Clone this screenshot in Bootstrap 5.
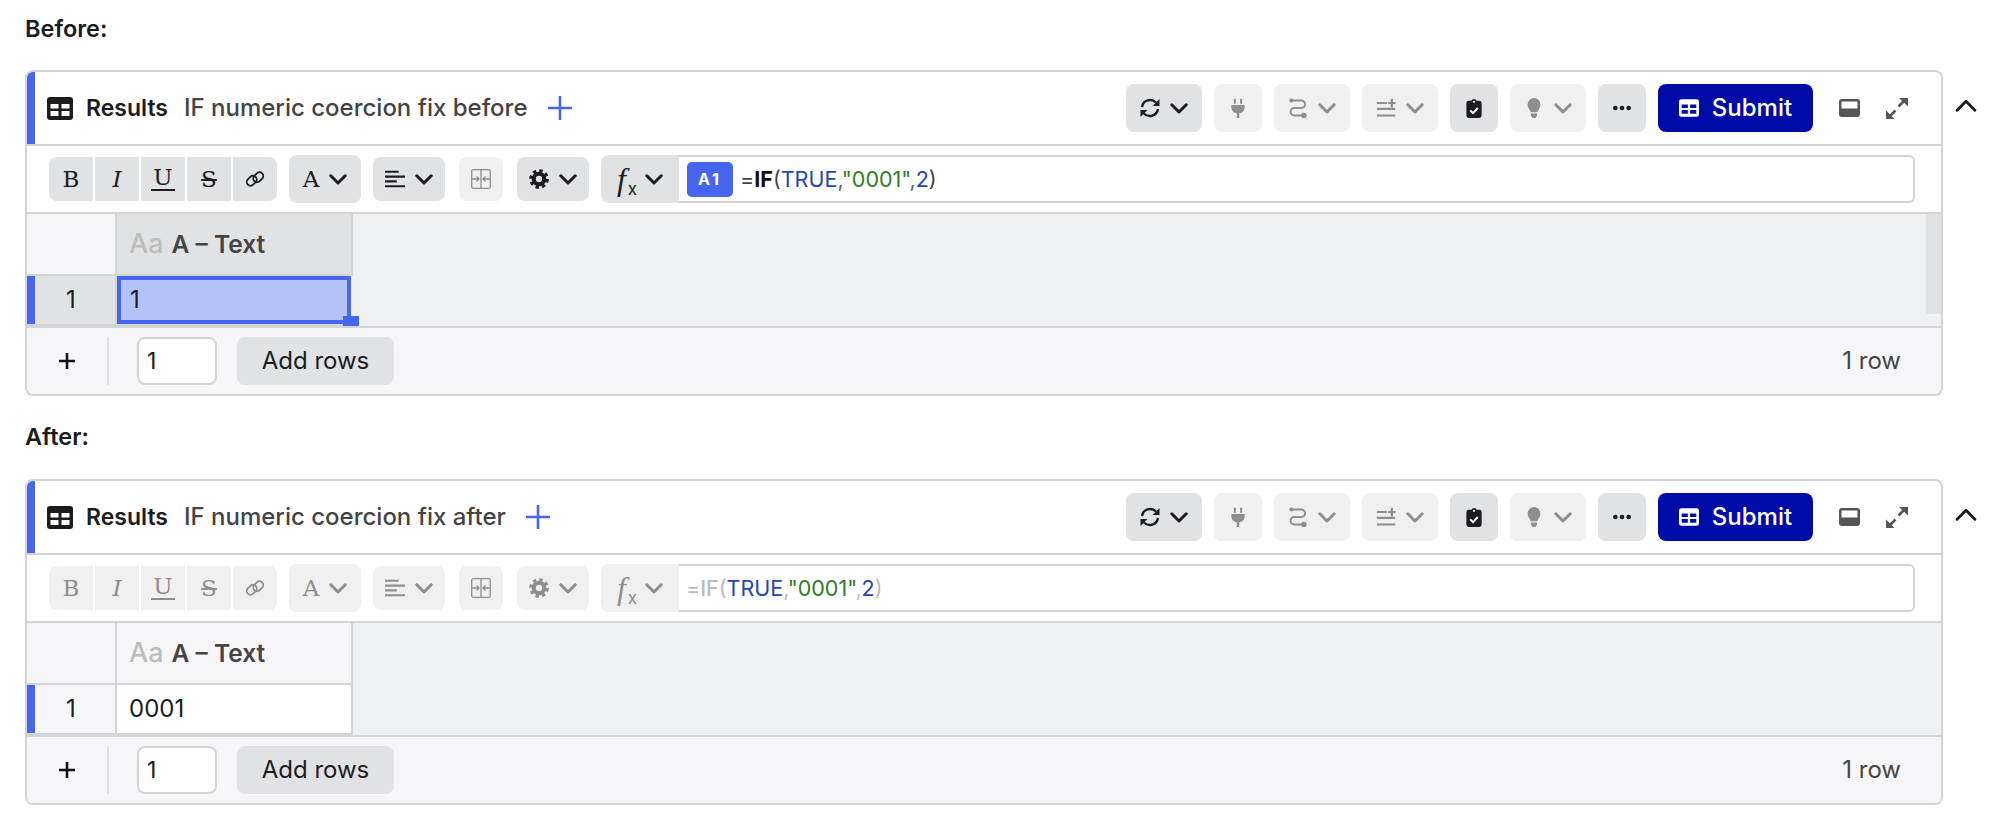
<!DOCTYPE html>
<html lang="en">
<head>
    <meta charset="UTF-8">
    <meta name="viewport" content="width=device-width, initial-scale=1.0">
    <title>IF numeric coercion fix</title>
    <link rel="stylesheet" href="https://cdn.jsdelivr.net/npm/bootstrap@5.3.0/dist/css/bootstrap.min.css">
    <style>
        body { font-family: Inter, "Liberation Sans", sans-serif; color: #1c1c1e; background: #fff; padding-left: 25px; font-size: 24px; }
        .cap { height: 58px; line-height: 58px; margin: 0 0 12px 0; font-size: 23.500px; font-weight: 600; }
        .cap-after { margin-top: 12px; margin-bottom: 13px; }
        .sheet { width: 1918px; height: 326px; border: 2px solid #d3d4d5; border-radius: 8px; overflow: hidden; flex: none; }
        .up-arrow { width: 22px; height: 13px; margin: 29px 0 0 12px; color: #1c1c1e; flex: none; }

        .sheet-head { height: 72px; border-bottom: 0; }
        .blue-strip { width: 8px; background: #4766f0; flex: none; }
        .head-icon { width: 26px; height: 23px; margin-left: 12px; color: #1c1c1e; }
        .head-name { margin-left: 13px; font-size: 23px; font-weight: 600; }
        .head-title { margin-left: 16px; font-size: 24px; font-weight: 500; color: #444; }
        .head-plus { width: 24px; height: 24px; margin-left: 20px; color: #4766f0; }
        .head-tools { margin-left: auto; margin-right: 33px; gap: 12px; }

        .tb { padding: 0; border: 0; border-radius: 8px; height: 44px; display: flex; align-items: center; justify-content: center; }
        .tall { height: 48px; }
        .on, .on:hover { background: #e1e2e4; color: #1c1c1e; }
        .off, .off:hover { background: #f0f0f0; color: #8e8e8e; }
        .sq { width: 48px; }
        .drop { width: 76px; gap: 10px; }
        .chev { width: 18px; height: 11px; }
        .ic20 { width: 20px; height: 20px; }
        .submit-btn, .submit-btn:hover { background: #000ca8; color: #fff; }
        .submit-btn { width: 155px; gap: 13px; font-size: 24px; font-weight: 500; }
        .submit-ic { width: 20px; height: 18px; }
        .win-ic { width: 21px; height: 18px; margin-left: 14px; }
        .exp-ic { width: 22px; height: 21px; color: #555; margin-left: 14px; }

        .fmt-bar { height: 68px; border-top: 2px solid #d3d4d5; padding-left: 22px; padding-right: 26px; }
        .joined { gap: 2px; margin-right: 12px; }
        .joined .tb { width: 44px; border-radius: 0; }
        .joined .tb:first-child { border-radius: 8px 0 0 8px; }
        .joined .tb:last-child { border-radius: 0 8px 8px 0; }
        .slab { font-family: "DejaVu Serif", serif; font-size: 23px; font-weight: 400; line-height: 1; }
        .slab-i { font-style: italic; }
        .slab-u { border-bottom: 2px solid currentColor; line-height: 21px; height: 24px; padding: 0 2px; }
        .slab-s { text-decoration: line-through; text-decoration-thickness: 2px; }
        .wide { width: 72px; gap: 10px; margin-right: 12px; }
        .mrg { width: 44px; margin: 0 14px; }
        .func { width: 78px; gap: 8px; border-radius: 8px 0 0 8px; }
        .fx { font-family: "Liberation Serif", serif; font-style: italic; font-size: 32px; line-height: 1; }
        .fx sub { font-family: Inter, sans-serif; font-style: normal; font-size: 17px; bottom: -5px; top: auto; margin-left: 2px; }
        .formula { height: 48px; border: 2px solid #d3d4d5; border-left: 0; border-radius: 0 6px 6px 0; padding-left: 7px; font-size: 21.500px; }
        .cell-tag { width: 46px; height: 35px; border-radius: 5px; background: #4766f0; color: #fff; font-size: 16px; font-weight: 700; letter-spacing: 3px; margin-right: 7px; margin-left: 1px; }
        .f-op { color: #444; } .f-fn { font-weight: 700; color: #111; } .f-num { color: #1e47b8; } .f-str { color: #2f7d1e; } .f-sep { color: #666; }
        .dim .f-op, .dim .f-sep { color: #bbb; }
        .dim .f-fn { color: #bbb; font-weight: 500; }

        .grid-area { height: 116px; background: #eff0f2; border-top: 2px solid #d3d4d5; border-bottom: 2px solid #d3d4d5; position: relative; }
        .grid-row { height: 60px; }
        .grid-row2 { height: 52px; border-top: 2px solid #d3d4d5; width: 326px; border-bottom: 2px solid #d3d4d5; }
        .corner { width: 90px; background: #f6f6f8; border-right: 2px solid #d3d4d5; }
        .col-a { width: 236px; padding-left: 12px; gap: 8px; border-right: 2px solid #d3d4d5; background: #f6f6f8; font-size: 24.500px; font-weight: 600; color: #444; }
        .col-a.sel { background: #e1e2e4; }
        .col-type { color: #bdbdbd; font-size: 27px; font-weight: 500; }
        .row-no { width: 90px; background: #f6f6f8; border-right: 2px solid #d3d4d5; }
        .row-no.sel { background: #e1e2e4; }
        .row-no-val { flex: 1; text-align: center; padding-right: 8px; }
        .val-cell { width: 236px; padding-left: 12px; background: #fff; border-right: 2px solid #d3d4d5; position: relative; }
        .val-cell.sel { background: #b4c2f7; border: 4px solid #4766f0; width: 234px; padding-left: 9px; }
        .fill-dot { position: absolute; right: -12px; bottom: -6px; width: 16px; height: 10px; background: #4766f0; }
        .scroll-thumb { position: absolute; top: 0; right: 0; width: 15px; height: 100px; background: #e0e1e3; }

        .sheet-foot { height: 66px; background: #f6f6f8; padding-left: 32px; padding-right: 40px; }
        .foot-plus { width: 16px; height: 16px; color: #111; }
        .foot-line { width: 2px; height: 48px; background: #e1e2e4; margin: 0 28px 0 32px; }
        .count-box { width: 80px; height: 48px; border: 2px solid #d3d4d5; border-radius: 8px; padding: 0 8px; font-size: 23px; font-family: inherit; color: #1c1c1e; }
        .add-btn, .add-btn:hover { background: #e1e2e4; color: #1c1c1e; }
        .add-btn { width: 157px; height: 48px; margin-left: 20px; border: 0; border-radius: 8px; font-size: 24px; padding: 0; }
        .row-count { margin-left: auto; color: #444; font-size: 24px; }
    </style>
</head>
<body>
    <svg class="d-none" xmlns="http://www.w3.org/2000/svg">
        <symbol id="i-table" viewBox="0 0 26 23"><path fill="currentColor" fill-rule="evenodd" d="M3 0h20a3 3 0 0 1 3 3v17a3 3 0 0 1-3 3H3a3 3 0 0 1-3-3V3a3 3 0 0 1 3-3zM3.500 7v4.500h8V7zM14.500 7v4.500h8V7zM3.500 14v5h8v-5zM14.500 14v5h8v-5z"/></symbol>
        <symbol id="i-plus" viewBox="0 0 24 24"><path d="M12 0v24M0 12h24" stroke="currentColor" stroke-width="2.600" fill="none"/></symbol>
        <symbol id="i-plus-b" viewBox="0 0 24 24"><path d="M12 0v24M0 12h24" stroke="currentColor" stroke-width="3.800" fill="none"/></symbol>
        <symbol id="i-chev" viewBox="0 0 18 11"><path d="M1.800 1.800 9 9l7.200-7.200" stroke="currentColor" stroke-width="3" fill="none" stroke-linecap="round" stroke-linejoin="round"/></symbol>
        <symbol id="i-sync" viewBox="2 2 20 20"><g fill="none" stroke="currentColor" stroke-width="2.400"><path d="M4 11A8.200 8.200 0 0 1 18 6.500"/><path d="M20 13A8.200 8.200 0 0 1 6 17.500"/></g><path fill="currentColor" d="M21.500 3v7h-7zM2.500 21v-7h7z"/></symbol>
        <symbol id="i-plug" viewBox="0 0 20 24"><path fill="currentColor" d="M5 1h2.500v6H5zM12.500 1H15v6h-2.500zM2 8.500h16v3a7 7 0 0 1-6.500 6.800V24h-3v-5.700A7 7 0 0 1 2 11.500z"/></symbol>
        <symbol id="i-route" viewBox="0 0 24 24"><path d="M5 3h11a4.500 4.500 0 0 1 0 9H7.500a4.500 4.500 0 0 0 0 9H17" stroke="currentColor" stroke-width="2.400" fill="none"/><circle cx="4" cy="3" r="2.500" fill="currentColor"/><circle cx="19" cy="21" r="3.300" fill="currentColor"/></symbol>
        <symbol id="i-sliders" viewBox="0 0 24 24"><path d="M1 6h12M1 13h22M1 21h22M19 1v10M14.500 6h9" stroke="currentColor" stroke-width="2.600" fill="none"/></symbol>
        <symbol id="i-clip" viewBox="0 0 16 21"><path fill="currentColor" d="M2.500 3H5.200a3 3 0 0 1 5.600 0h2.700A2.500 2.500 0 0 1 16 5.500v13a2.500 2.500 0 0 1-2.500 2.500h-11A2.500 2.500 0 0 1 0 18.500v-13A2.500 2.500 0 0 1 2.500 3z"/><path d="M4 13l3 3 5-5.500" stroke="#fff" stroke-width="2" fill="none"/><circle cx="8" cy="4" r="1.200" fill="#fff"/></symbol>
        <symbol id="i-bulb" viewBox="0 0 16 24"><path fill="currentColor" d="M8 0a7.700 7.700 0 0 1 7.700 7.700c0 4-3 6.300-3.700 9.300H4C3.300 14 .3 11.700.3 7.700A7.700 7.700 0 0 1 8 0zM4.300 18.500h7.400V21l-2 3H6.300l-2-3z"/></symbol>
        <symbol id="i-dots" viewBox="0 0 24 24"><circle cx="4" cy="12" r="2.800" fill="currentColor"/><circle cx="12" cy="12" r="2.800" fill="currentColor"/><circle cx="20" cy="12" r="2.800" fill="currentColor"/></symbol>
        <symbol id="i-win" viewBox="0 0 21 18"><path fill="#555" fill-rule="evenodd" d="M3 0h15a3 3 0 0 1 3 3v12a3 3 0 0 1-3 3H3a3 3 0 0 1-3-3V3a3 3 0 0 1 3-3zM2.500 2.500v7h16v-7z"/></symbol>
        <symbol id="i-exp" viewBox="0 0 22 21"><path d="M12.500 8.500l5-5M9.500 12.500l-5 5" stroke="currentColor" stroke-width="2.600" fill="none"/><path fill="currentColor" d="M13 0h9v8.500zM0 21v-8.500l8.500 8.500z"/></symbol>
        <symbol id="i-gear" viewBox="0 0 24 24"><circle cx="12" cy="12" r="6.300" fill="none" stroke="currentColor" stroke-width="5"/><circle cx="12" cy="12" r="10" fill="none" stroke="currentColor" stroke-width="3.600" stroke-dasharray="4.100 3.754"/></symbol>
        <symbol id="i-merge" viewBox="0 0 20 20"><g fill="none" stroke="currentColor" stroke-width="1.300"><rect x=".7" y=".7" width="18.600" height="18.600" rx="1.500"/><path d="M10 .7v18.600M1 10h7M12 10h7M5.500 7.500 8 10l-2.500 2.500M14.500 7.500 12 10l2.500 2.500"/></g></symbol>
        <symbol id="i-link" viewBox="0 0 20 20"><g fill="none" stroke="currentColor" stroke-width="1.800"><rect x="1.200" y="8" width="11" height="7.500" rx="3.700" transform="rotate(-45 6.700 11.700)"/><rect x="7.800" y="4.500" width="11" height="7.500" rx="3.700" transform="rotate(-45 13.300 8.300)"/></g></symbol>
        <symbol id="i-align" viewBox="0 0 22 20"><path d="M0 2h15M0 7.300h22M0 12.600h13M0 18h22" stroke="currentColor" stroke-width="2.400" fill="none"/></symbol>
    </svg>

    <div class="cap">Before:</div>
    <div class="d-flex">
        <div class="sheet">
            <div class="sheet-head d-flex align-items-center">
                <div class="blue-strip align-self-stretch"></div>
                <svg class="head-icon"><use href="#i-table"/></svg>
                <span class="head-name">Results</span>
                <span class="head-title">IF numeric coercion fix before</span>
                <svg class="head-plus"><use href="#i-plus"/></svg>
                <div class="head-tools d-flex align-items-center">
                    <button class="btn tb tall drop on"><svg class="ic20"><use href="#i-sync"/></svg><svg class="chev"><use href="#i-chev"/></svg></button>
                    <button class="btn tb tall sq off"><svg class="ic20"><use href="#i-plug"/></svg></button>
                    <button class="btn tb tall drop off"><svg class="ic20"><use href="#i-route"/></svg><svg class="chev"><use href="#i-chev"/></svg></button>
                    <button class="btn tb tall drop off"><svg class="ic20"><use href="#i-sliders"/></svg><svg class="chev"><use href="#i-chev"/></svg></button>
                    <button class="btn tb tall sq on"><svg class="ic20"><use href="#i-clip"/></svg></button>
                    <button class="btn tb tall drop off"><svg class="ic20"><use href="#i-bulb"/></svg><svg class="chev"><use href="#i-chev"/></svg></button>
                    <button class="btn tb tall sq on"><svg class="ic20"><use href="#i-dots"/></svg></button>
                    <button class="btn tb tall submit-btn"><svg class="submit-ic"><use href="#i-table"/></svg>Submit</button>
                    <svg class="win-ic"><use href="#i-win"/></svg>
                    <svg class="exp-ic"><use href="#i-exp"/></svg>
                </div>
            </div>
            <div class="fmt-bar d-flex align-items-center">
                <div class="joined d-flex">
                    <button class="btn tb on"><span class="slab">B</span></button>
                    <button class="btn tb on"><span class="slab slab-i">I</span></button>
                    <button class="btn tb on"><span class="slab slab-u">U</span></button>
                    <button class="btn tb on"><span class="slab slab-s">S</span></button>
                    <button class="btn tb on"><svg class="ic20"><use href="#i-link"/></svg></button>
                </div>
                <button class="btn tb tall wide on"><span class="slab">A</span><svg class="chev"><use href="#i-chev"/></svg></button>
                <button class="btn tb wide on me-0"><svg class="ic20"><use href="#i-align"/></svg><svg class="chev"><use href="#i-chev"/></svg></button>
                <button class="btn tb mrg off"><svg class="ic20"><use href="#i-merge"/></svg></button>
                <button class="btn tb wide on"><svg class="ic20"><use href="#i-gear"/></svg><svg class="chev"><use href="#i-chev"/></svg></button>
                <button class="btn tb tall func on"><span class="fx">f<sub>x</sub></span><svg class="chev"><use href="#i-chev"/></svg></button>
                <div class="formula flex-grow-1 d-flex align-items-center">
                    <span class="cell-tag d-flex align-items-center justify-content-center">A1</span>
                    <span><span class="f-op">=</span><span class="f-fn">IF</span><span class="f-op">(</span><span class="f-num">TRUE</span><span class="f-sep">,</span><span class="f-str">"0001"</span><span class="f-sep">,</span><span class="f-num">2</span><span class="f-op">)</span></span>
                </div>
            </div>
            <div class="grid-area">
                <div class="grid-row d-flex">
                    <div class="corner"></div>
                    <div class="col-a sel d-flex align-items-center"><span class="col-type">Aa</span><span>A – Text</span></div>
                </div>
                <div class="grid-row2 d-flex">
                    <div class="row-no sel d-flex"><div class="blue-strip"></div><div class="row-no-val align-self-center">1</div></div>
                    <div class="val-cell sel d-flex align-items-center">1<div class="fill-dot"></div></div>
                </div>
                <div class="scroll-thumb"></div>
            </div>
            <div class="sheet-foot d-flex align-items-center">
                <svg class="foot-plus"><use href="#i-plus-b"/></svg>
                <div class="foot-line"></div>
                <input class="count-box" type="text" value="1">
                <button class="btn add-btn">Add rows</button>
                <span class="row-count">1 row</span>
            </div>
        </div>
        <svg class="up-arrow" viewBox="0 0 18 11"><path d="M1.500 9.500 9 2l7.500 7.500" stroke="currentColor" stroke-width="2.400" fill="none" stroke-linecap="round" stroke-linejoin="round"/></svg>
    </div>

    <div class="cap cap-after">After:</div>
    <div class="d-flex">
        <div class="sheet">
            <div class="sheet-head d-flex align-items-center">
                <div class="blue-strip align-self-stretch"></div>
                <svg class="head-icon"><use href="#i-table"/></svg>
                <span class="head-name">Results</span>
                <span class="head-title">IF numeric coercion fix after</span>
                <svg class="head-plus"><use href="#i-plus"/></svg>
                <div class="head-tools d-flex align-items-center">
                    <button class="btn tb tall drop on"><svg class="ic20"><use href="#i-sync"/></svg><svg class="chev"><use href="#i-chev"/></svg></button>
                    <button class="btn tb tall sq off"><svg class="ic20"><use href="#i-plug"/></svg></button>
                    <button class="btn tb tall drop off"><svg class="ic20"><use href="#i-route"/></svg><svg class="chev"><use href="#i-chev"/></svg></button>
                    <button class="btn tb tall drop off"><svg class="ic20"><use href="#i-sliders"/></svg><svg class="chev"><use href="#i-chev"/></svg></button>
                    <button class="btn tb tall sq on"><svg class="ic20"><use href="#i-clip"/></svg></button>
                    <button class="btn tb tall drop off"><svg class="ic20"><use href="#i-bulb"/></svg><svg class="chev"><use href="#i-chev"/></svg></button>
                    <button class="btn tb tall sq on"><svg class="ic20"><use href="#i-dots"/></svg></button>
                    <button class="btn tb tall submit-btn"><svg class="submit-ic"><use href="#i-table"/></svg>Submit</button>
                    <svg class="win-ic"><use href="#i-win"/></svg>
                    <svg class="exp-ic"><use href="#i-exp"/></svg>
                </div>
            </div>
            <div class="fmt-bar d-flex align-items-center">
                <div class="joined d-flex">
                    <button class="btn tb off"><span class="slab">B</span></button>
                    <button class="btn tb off"><span class="slab slab-i">I</span></button>
                    <button class="btn tb off"><span class="slab slab-u">U</span></button>
                    <button class="btn tb off"><span class="slab slab-s">S</span></button>
                    <button class="btn tb off"><svg class="ic20"><use href="#i-link"/></svg></button>
                </div>
                <button class="btn tb tall wide off"><span class="slab">A</span><svg class="chev"><use href="#i-chev"/></svg></button>
                <button class="btn tb wide off me-0"><svg class="ic20"><use href="#i-align"/></svg><svg class="chev"><use href="#i-chev"/></svg></button>
                <button class="btn tb mrg off"><svg class="ic20"><use href="#i-merge"/></svg></button>
                <button class="btn tb wide off"><svg class="ic20"><use href="#i-gear"/></svg><svg class="chev"><use href="#i-chev"/></svg></button>
                <button class="btn tb tall func off"><span class="fx">f<sub>x</sub></span><svg class="chev"><use href="#i-chev"/></svg></button>
                <div class="formula dim flex-grow-1 d-flex align-items-center">
                    <span><span class="f-op">=</span><span class="f-fn">IF</span><span class="f-op">(</span><span class="f-num">TRUE</span><span class="f-sep">,</span><span class="f-str">"0001"</span><span class="f-sep">,</span><span class="f-num">2</span><span class="f-op">)</span></span>
                </div>
            </div>
            <div class="grid-area">
                <div class="grid-row d-flex">
                    <div class="corner"></div>
                    <div class="col-a d-flex align-items-center"><span class="col-type">Aa</span><span>A – Text</span></div>
                </div>
                <div class="grid-row2 d-flex">
                    <div class="row-no d-flex"><div class="blue-strip"></div><div class="row-no-val align-self-center">1</div></div>
                    <div class="val-cell d-flex align-items-center">0001</div>
                </div>
            </div>
            <div class="sheet-foot d-flex align-items-center">
                <svg class="foot-plus"><use href="#i-plus-b"/></svg>
                <div class="foot-line"></div>
                <input class="count-box" type="text" value="1">
                <button class="btn add-btn">Add rows</button>
                <span class="row-count">1 row</span>
            </div>
        </div>
        <svg class="up-arrow" viewBox="0 0 18 11"><path d="M1.500 9.500 9 2l7.500 7.500" stroke="currentColor" stroke-width="2.400" fill="none" stroke-linecap="round" stroke-linejoin="round"/></svg>
    </div>
</body>
</html>
